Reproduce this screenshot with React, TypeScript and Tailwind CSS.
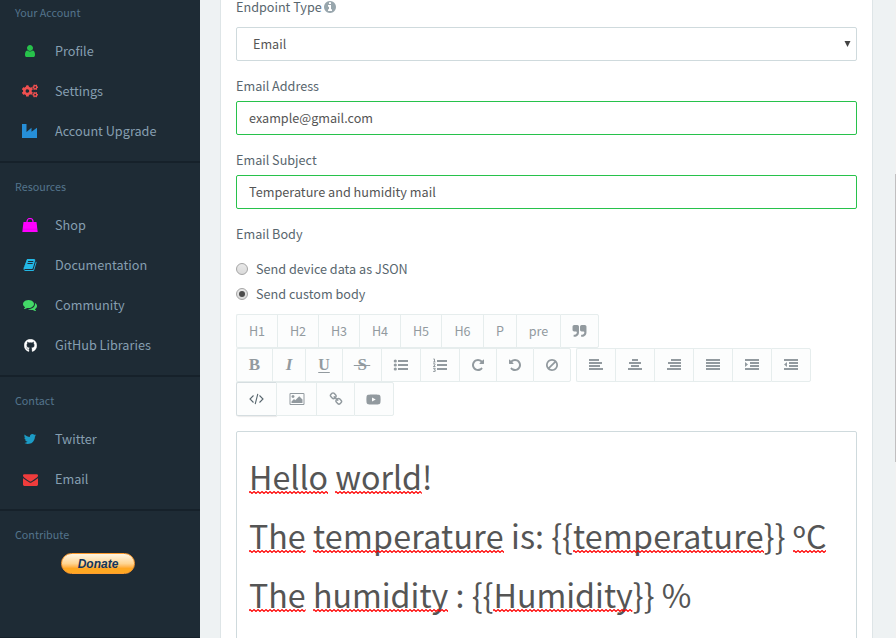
import React from "react";
import { FaCogs, FaGithub, FaYoutube } from "react-icons/fa";

const P = {
  user: "M1536 1399q0 109-62.5 187t-150.5 78h-854q-88 0-150.5-78t-62.5-187q0-85 8.5-160.5t31.5-152 58.5-131 94-89 134.5-34.5q131 128 313 128t313-128q76 0 134.5 34.5t94 89 58.5 131 31.5 152 8.5 160.5zm-256-887q0 159-112.5 271.5t-271.5 112.5-271.5-112.5-112.5-271.5 112.5-271.5 271.5-112.5 271.5 112.5 112.5 271.5z",
  book: "M1703 478q40 57 18 129l-275 906q-19 64-76.5 107.5t-122.5 43.5h-923q-77 0-148.5-53.5t-99.5-131.5q-24-67-2-127 0-4 3-27t4-37q1-8-3-21.5t-3-19.5q2-11 8-21t16.5-23.5 16.5-23.5q23-38 45-91.5t30-91.5q3-10 .5-30t-.5-28q3-11 17-28t17-23q21-36 42-92t25-90q1-9-2.5-32t.5-28q4-13 22-30.5t22-22.5q19-26 42.5-84.5t27.5-96.5q1-8-3-25.5t-2-26.5q2-8 9-18t18-23 17-21q8-12 16.5-30.5t15-35 16-36 19.5-32 26.5-23.5 36-11.5 47.5 5.5l-1 3q38-9 51-9h761q74 0 114 56t18 130l-274 906q-36 119-71.5 153.5t-128.5 34.5h-869q-27 0-38 15-11 16-1 43 24 70 144 70h923q29 0 56-15.5t35-41.5l300-987q7-22 5-57 38 15 59 43zm-1064 2q-4 13 2 22.5t20 9.5h608q13 0 25.5-9.5t16.5-22.5l21-64q4-13-2-22.5t-20-9.5h-608q-13 0-25.5 9.5t-16.5 22.5zm-83 256q-4 13 2 22.5t20 9.5h608q13 0 25.5-9.5t16.5-22.5l21-64q4-13-2-22.5t-20-9.5h-608q-13 0-25.5 9.5t-16.5 22.5z",
  comments: "M1408 768q0 139-94 257t-256.5 186.5-353.5 68.5q-86 0-176-16-124 88-278 128-36 9-86 16h-3q-11 0-20.5-8t-11.5-21q-1-3-1-6.5t.5-6.5 2-6l2.5-5 3.5-5.5 4-5 4.5-5 4-4.5q5-6 23-25t26-29.5 22.5-29 25-38.5 20.5-44q-124-72-195-177t-71-224q0-139 94-257t256.5-186.5 353.5-68.5 353.5 68.5 256.5 186.5 94 257zm384 256q0 120-71 224.5t-195 176.5q10 24 20.5 44t25 38.5 22.5 29 26 29.5 23 25q1 1 4 4.5t4.5 5 4 5 3.5 5.5l2.5 5 2 6 .5 6.5-1 6.5q-3 14-13 22t-22 7q-50-7-86-16-154-40-278-128-90 16-176 16-271 0-472-132 58 4 88 4 161 0 309-45t264-129q125-92 192-212t67-254q0-77-23-152 129 71 204 178t75 230z",
  twitter: "M1684 408q-67 98-162 167 1 14 1 42 0 130-38 259.5t-115.5 248.5-184.5 210.5-258 146-323 54.5q-271 0-496-145 35 4 78 4 225 0 401-138-105-2-188-64.5t-114-159.5q33 5 61 5 43 0 85-11-112-23-185.5-111.5t-73.5-205.5v-4q68 38 146 41-66-44-105-115t-39-154q0-88 44-163 121 149 294.5 238.5t371.5 99.5q-8-38-8-74 0-134 94.5-228.5t228.5-94.5q140 0 236 102 109-21 205-78-37 115-142 178 93-10 186-50z",
  envelope: "M1792 710v794q0 66-47 113t-113 47h-1472q-66 0-113-47t-47-113v-794q44 49 101 87 362 246 497 345 57 42 92.5 65.5t94.5 48 110 24.5h2q51 0 110-24.5t94.5-48 92.5-65.5q170-123 498-345 57-39 100-87zm0-294q0 79-49 151t-122 123q-376 261-468 325-10 7-42.5 31t-54 38.5-52 32.5-57.5 27-50 9h-2q-23 0-50-9t-57.5-27-52-32.5-54-38.5-42.5-31q-91-64-262-182.5t-205-142.5q-62-42-117-115.5t-55-136.5q0-78 41.5-130t118.5-52h1472q65 0 112.5 47t47.5 113z",
  info: "M1152 1376v-160q0-14-9-23t-23-9h-96v-512q0-14-9-23t-23-9h-320q-14 0-23 9t-9 23v160q0 14 9 23t23 9h96v320h-96q-14 0-23 9t-9 23v160q0 14 9 23t23 9h448q14 0 23-9t9-23zm-128-896v-160q0-14-9-23t-23-9h-192q-14 0-23 9t-9 23v160q0 14 9 23t23 9h192q14 0 23-9t9-23zm640 416q0 209-103 385.5t-279.5 279.5-385.5 103-385.5-103-279.5-279.5-103-385.5 103-385.5 279.5-279.5 385.5-103 385.5 103 279.5 279.5 103 385.5z",
  quote: "M832 320v704q0 104-40.5 198.5t-109.5 163.5-163.5 109.5-198.5 40.5h-64q-26 0-45-19t-19-45v-128q0-26 19-45t45-19h64q106 0 181-75t75-181v-32q0-40-28-68t-68-28h-224q-80 0-136-56t-56-136v-384q0-80 56-136t136-56h384q80 0 136 56t56 136zM1728 320v704q0 104-40.5 198.5t-109.5 163.5-163.5 109.5-198.5 40.5h-64q-26 0-45-19t-19-45v-128q0-26 19-45t45-19h64q106 0 181-75t75-181v-32q0-40-28-68t-68-28h-224q-80 0-136-56t-56-136v-384q0-80 56-136t136-56h384q80 0 136 56t56 136z",
  repeat: "M1664 256v448q0 26-19 45t-45 19h-448q-42 0-59-40-17-39 14-69l138-138q-148-137-349-137-104 0-198.5 40.5t-163.5 109.5-109.5 163.5-40.5 198.5 40.5 198.5 109.5 163.5 163.5 109.5 198.5 40.5q119 0 225-52t179-147q7-10 23-12 15 0 25 9l137 138q9 8 9.5 20.5t-7.5 22.5q-109 132-264 204.5t-327 72.5q-156 0-298-61t-245-164-164-245-61-298 61-298 164-245 245-164 298-61q147 0 284.5 55.5t244.5 156.5l130-129q29-31 70-14 39 17 39 59z",
  ban: "M1440 893q0-161-87-295l-754 753q137 89 297 89 111 0 211.5-43.5t173.5-116.5 116-174.5 43-212.5zm-999 299l755-754q-135-91-300-91-148 0-273 73t-198 199-73 274q0 162 89 299zm1223-299q0 157-61 300t-163.5 246-245 164-298.5 61-298.5-61-245-164-163.5-246-61-300 61-299.5 163.5-245.5 245-164 298.5-61 298.5 61 245 164 163.5 245.5 61 299.5z",
  link: "M1520 1216q0-40-28-68l-208-208q-28-28-68-28-42 0-72 32 3 3 19 18.5t21.5 21.5 15 19 13 25.5 3.5 27.5q0 40-28 68t-68 28q-15 0-27.5-3.5t-25.5-13-19-15-21.5-21.5-18.5-19q-33 31-33 73 0 40 28 68l206 207q27 27 68 27 40 0 68-26l147-146q28-28 28-67zm-703-705q0-40-28-68l-206-207q-28-28-68-28-39 0-68 27l-147 146q-28 28-28 67 0 40 28 68l208 208q27 27 68 27 42 0 72-31-3-3-19-18.5t-21.5-21.5-15-19-13-25.5-3.5-27.5q0-40 28-68t68-28q15 0 27.5 3.5t25.5 13 19 15 21.5 21.5 18.5 19q33-31 33-73zm895 705q0 120-85 203l-147 146q-83 83-203 83-121 0-204-85l-206-207q-83-83-83-203 0-123 88-209l-88-88q-86 88-208 88-120 0-204-84l-208-208q-84-84-84-204t85-203l147-146q83-83 203-83 121 0 204 85l206 207q83 83 83 203 0 123-88 209l88 88q86-88 208-88 120 0 204 84l208 208q84 84 84 204z",
  picture: "M576 576q0 80-56 136t-136 56-136-56-56-136 56-136 136-56 136 56 56 136zm1024 384v448h-1408v-192l320-320 160 160 512-512zm96-704h-1600q-13 0-22.5 9.5t-9.5 22.5v1216q0 13 9.5 22.5t22.5 9.5h1600q13 0 22.5-9.5t9.5-22.5v-1216q0-13-9.5-22.5t-22.5-9.5zm160 32v1216q0 66-47 113t-113 47h-1600q-66 0-113-47t-47-113v-1216q0-66 47-113t113-47h1600q66 0 113 47t47 113z",
};

function Fa({ d, size = 14, className = "" }: { d: string; size?: number; className?: string }) {
  return (
    <svg viewBox="0 0 1792 1792" width={size} height={size} fill="currentColor" overflow="visible" className={"shrink-0 " + className}>
      <path d={d} />
    </svg>
  );
}

/* Four-line text icons: each row is [x, width] on a 15px wide grid. */
function Bars({ rows, children }: { rows: number[][]; children?: React.ReactNode }) {
  return (
    <svg width="15" height="12" viewBox="0 0 15 12" fill="currentColor" overflow="visible">
      {rows.map(([x, w], i) => (
        <rect key={i} x={x} y={i * 3} width={w} height="2" />
      ))}
      {children}
    </svg>
  );
}

function ListIcon({ ordered = false }: { ordered?: boolean }) {
  return (
    <svg width="15" height="12" viewBox="0 0 15 12" fill="currentColor" overflow="visible">
      {[1, 5, 9].map((y) => (
        <g key={y}>
          <rect x="4" y={y} width="10" height="2" />
          {!ordered && <circle cx="1.3" cy={y + 1} r="1.6" />}
        </g>
      ))}
      {ordered && (
        <path
          d="M.3 0h1.200v3M.1 3h2.400M.1 4.800h1.900v1.200L.3 7.500h2.200M.1 9.300h2.200L1.200 10.700h1v1.700H.1"
          fill="none"
          stroke="currentColor"
          strokeWidth="1"
        />
      )}
    </svg>
  );
}

function NavHeading({ children }: { children: string }) {
  return <div className="mb-1.5 pl-[15px] text-[10.75px] leading-6 text-[#54748c]">{children}</div>;
}

function NavItem({ icon, color, label }: { icon: React.ReactNode; color: string; label: string }) {
  return (
    <a className="flex h-10 items-center pl-5">
      <span className={"flex w-5 justify-center " + color}>{icon}</span>
      <span className="ml-[15px] text-[12.68px] leading-5 text-[#869fb1]">{label}</span>
    </a>
  );
}

function NavSection({ title, children }: { title: string; children: React.ReactNode }) {
  return (
    <div className="border-t-2 border-[#16212a] pt-3 pb-2.5">
      <NavHeading>{title}</NavHeading>
      {children}
    </div>
  );
}

function Cell({ w, children, active = false, last = false, first = false }: { w: string; children: React.ReactNode; active?: boolean; last?: boolean; first?: boolean }) {
  return (
    <button
      className={[
        "flex h-[34px] shrink-0 items-center justify-center border-y border-l bg-[#fcfdfd] text-[12.6px] leading-5",
        active ? "border-[#d5dde0] text-[#58666e] shadow-[1px_1px_1px_rgba(90,90,90,0.12)]" : "border-[#e6eded] text-[#929a9f]",
        first ? "rounded-l-[2px]" : "",
        last ? "rounded-r-[2px] border-r" : "",
        w,
      ].join(" ")}
    >
      {children}
    </button>
  );
}

function Misspelled({ children, id, className = "" }: { children: React.ReactNode; id: string; className?: string }) {
  return (
    <span className={"relative inline-block " + className}>
      {children}
      <svg className="absolute bottom-[12px] left-0 h-[3px] w-full">
        <defs>
          <pattern id={id} width="4" height="3" patternUnits="userSpaceOnUse">
            <path d="M-1 2.500L1 .500L3 2.500L5 .500" fill="none" stroke="#f00" strokeWidth="1.15" />
          </pattern>
        </defs>
        <rect width="100%" height="3" fill={`url(#${id})`} />
      </svg>
    </span>
  );
}

function Label({ children }: { children: React.ReactNode }) {
  return <label className="flex h-5 items-center text-[12.63px] leading-5">{children}</label>;
}

function Radio({ checked = false, label }: { checked?: boolean; label: string }) {
  return (
    <label className="flex h-[25px] items-center">
      <span className="flex size-3 items-center justify-center rounded-full border border-[#a5a5a5] bg-linear-to-b from-[#e9e9e9] to-[#dadada]">
        {checked && <span className="size-1.5 rounded-full bg-[#4c4c4c]" />}
      </span>
      <span className="ml-2 text-[12.65px] leading-5">{label}</span>
    </label>
  );
}

export default function App() {
  return (
    <div className="flex h-[638px] w-[896px] overflow-hidden bg-[#eef2f3] font-['Noto_Sans_CJK_SC',sans-serif] text-[#58666e]">
      <aside className="h-full w-[200px] shrink-0 overflow-hidden bg-[#1e2b35]">
        <div className="pt-px pb-2.5">
          <NavHeading>Your Account</NavHeading>
          <NavItem icon={<Fa d={P.user} />} color="text-[#27c24b]" label="Profile" />
          <NavItem icon={<FaCogs size={16} />} color="text-[#f05050]" label="Settings" />
          <NavItem
            icon={
              <svg width="15" height="14" viewBox="0 0 15 14" fill="currentColor" className="mr-px">
                <path d="M0 0h4.500v8L9.500 3.800v4L15 3.800V14H0z" />
              </svg>
            }
            color="text-[#268fd8]"
            label="Account Upgrade"
          />
        </div>
        <NavSection title="Resources">
          <NavItem
            icon={
              <svg width="16" height="14" viewBox="0 0 16 14" fill="currentColor">
                <path d="M1.500 4h13L15.700 14H.3z" />
                <path d="M5 6V3.500a3 3 0 0 1 6 0V6" fill="none" stroke="currentColor" strokeWidth="1.200" />
                <path d="M.7 11.200h14.600" stroke="#c800d0" strokeWidth=".5" />
              </svg>
            }
            color="text-[#ff00ff]"
            label="Shop"
          />
          <NavItem icon={<Fa d={P.book} />} color="text-[#23b7e5]" label="Documentation" />
          <NavItem icon={<Fa d={P.comments} />} color="text-[#43d967]" label="Community" />
          <NavItem icon={<FaGithub size={13} stroke="currentColor" strokeWidth="14" />} color="text-white" label="GitHub Libraries" />
        </NavSection>
        <NavSection title="Contact">
          <NavItem icon={<Fa d={P.twitter} />} color="text-[#1c9cc6]" label="Twitter" />
          <NavItem icon={<Fa d={P.envelope} size={15} />} color="text-[#f03c3c]" label="Email" />
        </NavSection>
        <div className="h-32 border-t-2 border-[#16212a] pt-3">
          <div className="pl-[15px] text-[10.75px] leading-6 text-[#54748c]">Contribute</div>
          <button className="mt-[6px] ml-[61px] flex h-[21px] w-[74px] items-center justify-center rounded-full border border-[#ff9c2e] bg-linear-to-b from-[#fff6e4] from-0% via-[#ffd591] via-50% to-[#ffa822] to-75% font-['Liberation_Sans',sans-serif] text-[12px] leading-none font-bold text-[#12355c] italic">
            Donate
          </button>
        </div>
        <div className="h-1 bg-[#16212a]" />
      </aside>

      <main className="ml-5 h-full w-[653px] shrink-0 overflow-hidden border-x border-[#dee5e7] bg-white pr-[15px] pl-[15px]">
        <div className="-mt-[3px]">
          <Label>
            Endpoint Type
            <Fa d={P.info} size={14} className="ml-px text-[#98a6ad]" />
          </Label>
          <div className="mt-[10px] flex h-[34px] w-[621px] items-center justify-between rounded-[2px] border border-[#cfdadd] pr-[5px] pl-4 text-[12.6px] leading-5 text-[#555]">
            Email
            <svg width="7" height="6" viewBox="0 0 7 6" fill="#444">
              <path d="M.5 0h6L3.500 6z" />
            </svg>
          </div>
        </div>
        <div className="mt-[15px]">
          <Label>Email Address</Label>
          <div className="mt-[5px] flex h-[34px] w-[621px] items-center rounded-[2px] border border-[#27c24b] pl-3 text-[12.63px] leading-5 text-[#555]">example@gmail.com</div>
        </div>
        <div className="mt-[15px]">
          <Label>Email Subject</Label>
          <div className="mt-[5px] flex h-[34px] w-[621px] items-center rounded-[2px] border border-[#27c24b] pl-3 text-[12.7px] leading-5 text-[#555]">Temperature and humidity mail</div>
        </div>
        <div className="mt-[15px]">
          <Label>Email Body</Label>
        </div>
        <div className="mt-[12px]">
          <Radio label="Send device data as JSON" />
          <Radio checked label="Send custom body" />
        </div>

        <div className="mt-[8px] flex">
          <Cell first w="w-[41px]">H1</Cell>
          <Cell w="w-[41px]">H2</Cell>
          <Cell w="w-[41px]">H3</Cell>
          <Cell w="w-[41px]">H4</Cell>
          <Cell w="w-[41px]">H5</Cell>
          <Cell w="w-[42px]">H6</Cell>
          <Cell w="w-[33px]">P</Cell>
          <Cell w="w-[44px]">pre</Cell>
          <Cell last w="w-[39px]"><Fa d={P.quote} size={15} /></Cell>
        </div>
        <div className="flex gap-[5px]">
          <div className="flex">
            <Cell first w="w-[36px]"><span className="font-['Liberation_Serif',serif] text-[17px] font-bold">B</span></Cell>
            <Cell w="w-[33px]"><span className="font-['Liberation_Serif',serif] text-[17px] font-bold italic">I</span></Cell>
            <Cell w="w-[37px]"><span className="font-['Liberation_Serif',serif] text-[16px] font-bold underline decoration-1 underline-offset-2">U</span></Cell>
            <Cell w="w-[39px]"><span className="font-['Liberation_Serif',serif] text-[17px] font-bold line-through decoration-1 -tracking-[0.5px]">&nbsp;S&nbsp;</span></Cell>
            <Cell w="w-[39px]"><ListIcon /></Cell>
            <Cell w="w-[39px]"><ListIcon ordered /></Cell>
            <Cell w="w-[37px]"><Fa d={P.repeat} /></Cell>
            <Cell w="w-[37px]"><Fa d={P.repeat} className="-scale-x-100" /></Cell>
            <Cell last w="w-[38px]"><Fa d={P.ban} /></Cell>
          </div>
          <div className="flex">
            <Cell first w="w-[39px]"><Bars rows={[[0, 10], [0, 13], [0, 11], [0, 14]]} /></Cell>
            <Cell w="w-[39px]"><Bars rows={[[4, 6], [1, 12], [3, 8], [0, 14]]} /></Cell>
            <Cell w="w-[39px]"><Bars rows={[[4, 10], [1, 13], [3, 11], [0, 14]]} /></Cell>
            <Cell w="w-[39px]"><Bars rows={[[0, 14], [0, 14], [0, 14], [0, 14]]} /></Cell>
            <Cell w="w-[39px]"><Bars rows={[[0, 14], [5, 9], [5, 9], [0, 14]]}><path d="M0 3l3 2.5L0 8z" /></Bars></Cell>
            <Cell last w="w-[40px]"><Bars rows={[[0, 14], [5, 9], [5, 9], [0, 14]]}><path d="M3 3L0 5.5 3 8z" /></Bars></Cell>
          </div>
        </div>
        <div className="flex">
          <Cell first active w="w-[40px]">
            <svg width="15" height="12" viewBox="0 0 15 12" fill="none" stroke="currentColor" strokeWidth="1.1">
              <path d="M4.5 2.500L1 6l3.500 3.500M10.500 2.500L14 6l-3.500 3.500M8.800 .8L6.200 11.200" />
            </svg>
          </Cell>
          <Cell w="w-[40px]"><Fa d={P.picture} size={14} /></Cell>
          <Cell w="w-[38px]"><Fa d={P.link} size={14} /></Cell>
          <Cell last w="w-[40px]"><FaYoutube size={15} className="mr-px" /></Cell>
        </div>

        <div className="mt-[15px] h-[240px] w-[621px] rounded-[2px] border border-[#cfdadd] pt-[15px] pl-3 text-[32.2px] leading-[59px] whitespace-pre text-[#555]">
          <div className="h-[59px]">
            <Misspelled id="w1">Hello</Misspelled> <Misspelled id="w2">world</Misspelled>!
          </div>
          <div className="h-[59px]">
            <Misspelled id="w3">The</Misspelled> <Misspelled id="w4" className="tracking-[0.27px]">temperature</Misspelled> is: {"{{"}
            <Misspelled id="w5" className="tracking-[0.27px]">temperature</Misspelled>{"}} "}
            <Misspelled id="w6"><span className="relative top-[3px]">º</span>C</Misspelled>
          </div>
          <div className="h-[59px]">
            <Misspelled id="w7">The</Misspelled> <Misspelled id="w8">humidity</Misspelled> : {"{{"}
            <Misspelled id="w9">Humidity</Misspelled>{"}} %"}
          </div>
        </div>
      </main>

      <div className="ml-auto h-full w-px bg-[#f1f1f1] pt-[174px]">
        <div className="h-[288px] w-px bg-[#c1bfc0]" />
      </div>
    </div>
  );
}
